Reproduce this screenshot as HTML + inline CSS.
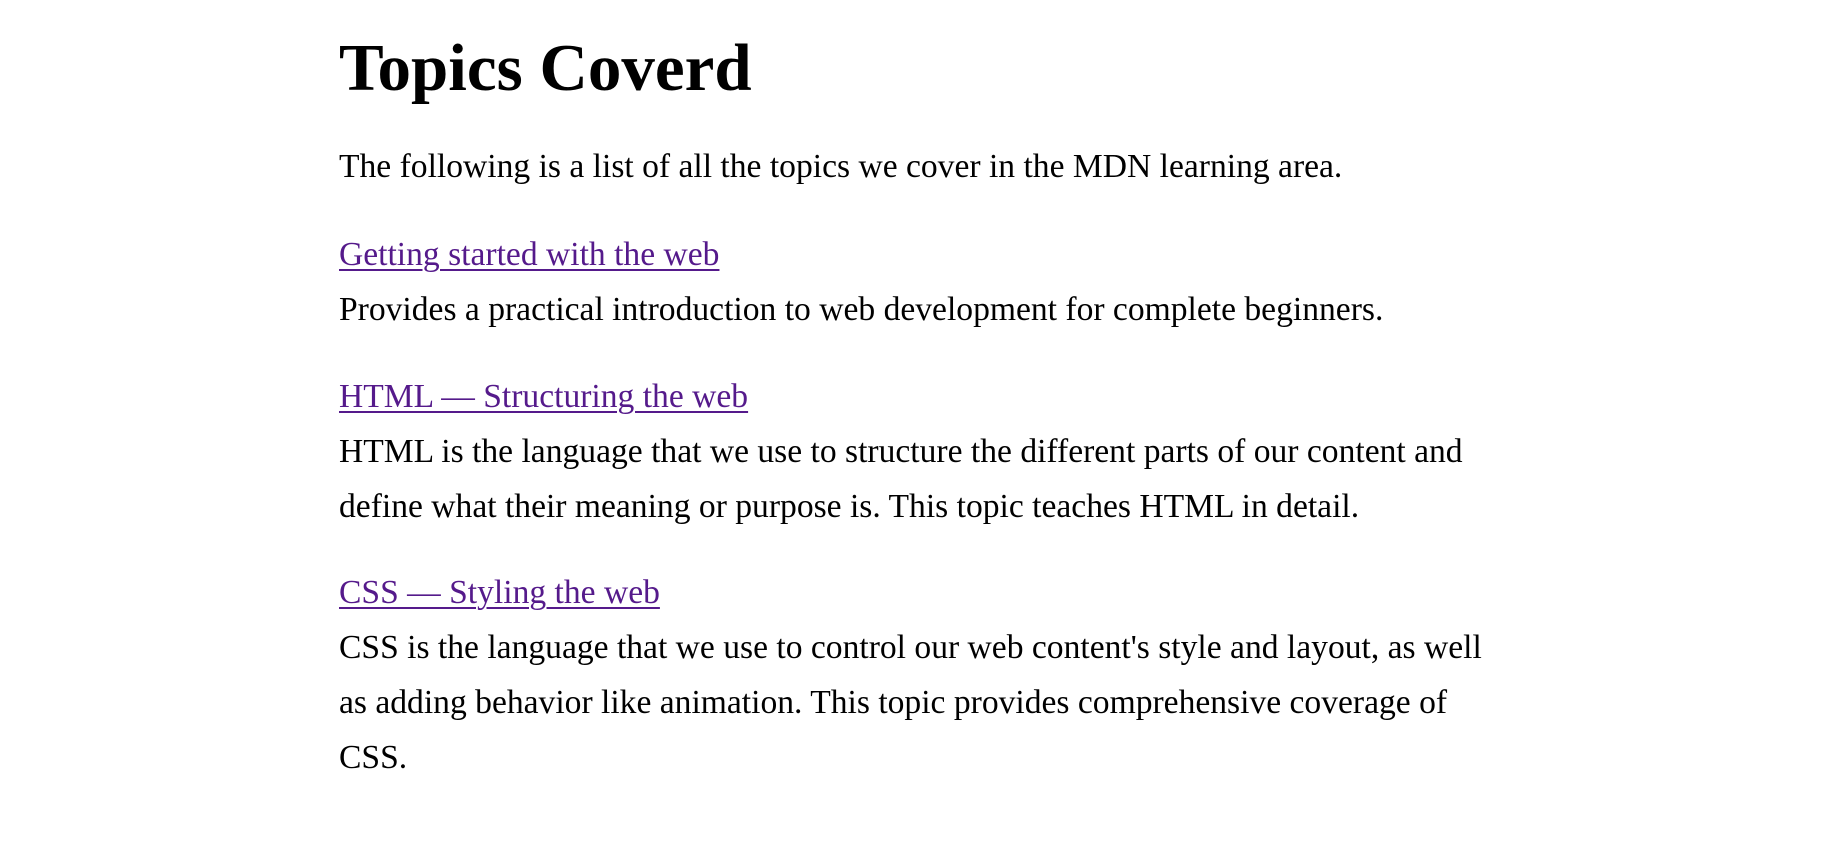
<!DOCTYPE html>
<html><head><meta charset="utf-8"><style>
html,body{margin:0;background:#fff;}
body{font-family:"Liberation Serif",serif;color:#000;font-size:33.6px;line-height:55px;position:relative;width:1823px;height:858px;overflow:hidden;}
.b{position:absolute;left:339px;width:1160px;}
h1{font-size:67px;line-height:80px;margin:0;font-weight:bold;}
a{color:#551a8b;text-decoration:underline;text-decoration-thickness:2px;text-underline-offset:4px;}
</style></head><body>
<div class="b" style="top:28px"><h1>Topics Coverd</h1></div>
<div class="b" style="top:139px">The following is a list of all the topics we cover in the MDN learning area.</div>
<div class="b" style="top:227px"><a href="#">Getting started with the web</a><br>Provides a practical introduction to web development for complete beginners.</div>
<div class="b" style="top:369px"><a href="#">HTML — Structuring the web</a><br>HTML is the language that we use to structure the different parts of our content and define what their meaning or purpose is. This topic teaches HTML in detail.</div>
<div class="b" style="top:565px"><a href="#">CSS — Styling the web</a><br>CSS is the language that we use to control our web content's style and layout, as well as adding behavior like animation. This topic provides comprehensive coverage of CSS.</div>
</body></html>
